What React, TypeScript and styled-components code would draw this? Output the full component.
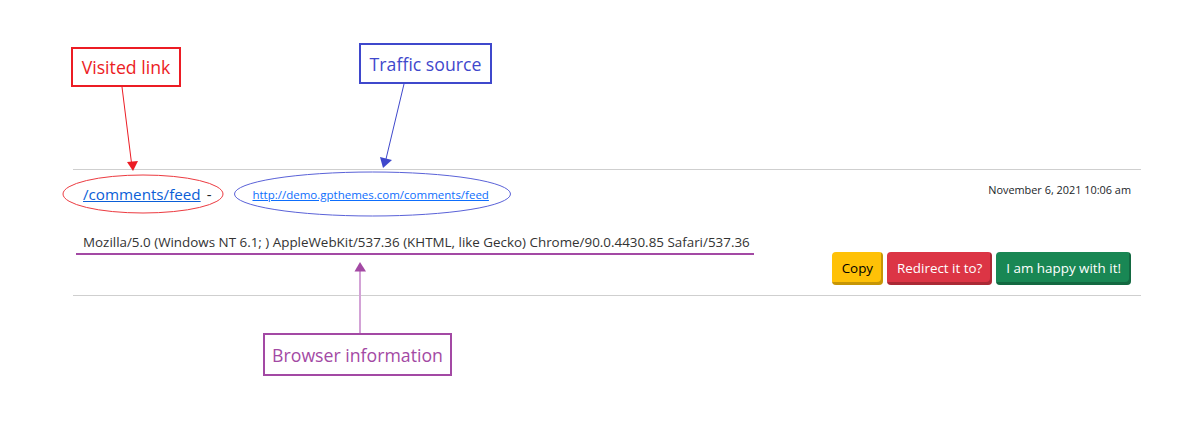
import styled, { createGlobalStyle } from 'styled-components';

const GlobalStyle = createGlobalStyle`
  body {
    margin: 0;
    background: #fff;
    font-family: 'Open Sans', 'Noto Sans', sans-serif;
    color: #212529;
  }
`;

type Tone = 'red' | 'blue' | 'purple';

const tones: Record<Tone, string> = {
  red: '#ec1c24',
  blue: '#3f48cc',
  purple: '#a349a4',
};

interface LabelProps {
  $tone: Tone;
  $left: number;
  $top: number;
  $width: number;
  $height: number;
}

function App() {
  return (
    <>
      <GlobalStyle />
      <StyledPage>
        <StyledLog>
          <StyledHeader>
            <StyledSource>
              <StyledPath href="#">/comments/feed</StyledPath>
              <StyledDash>-</StyledDash>
              <StyledReferer href="#">http://demo.gpthemes.com/comments/feed</StyledReferer>
            </StyledSource>
            <StyledDate>November 6, 2021 10:06 am</StyledDate>
          </StyledHeader>
          <StyledAgent>
            Mozilla/5.0 (Windows NT 6.1; ) AppleWebKit/537.36 (KHTML, like Gecko) Chrome/90.0.4430.85
            Safari/537.36
          </StyledAgent>
          <StyledActions>
            <StyledButton $bg="#ffc107" $fg="#000">Copy</StyledButton>
            <StyledButton $bg="#dc3545" $fg="#fff">Redirect it to?</StyledButton>
            <StyledButton $bg="#198754" $fg="#fff">I am happy with it!</StyledButton>
          </StyledActions>
        </StyledLog>

        <StyledOverlay width="1202" height="423" viewBox="0 0 1202 423">
          <line x1="122" y1="87" x2="131.5" y2="163" stroke="#ec1c24" strokeWidth="1" />
          <polygon points="127,162 138,161 133,171" fill="#ec1c24" />
          <ellipse cx="143" cy="194" rx="80" ry="19" fill="none" stroke="#ec3a40" strokeWidth="1" />

          <line x1="404" y1="84" x2="386" y2="159" stroke="#3f48cc" strokeWidth="1" />
          <polygon points="380,157 392,160 383,168" fill="#3f48cc" />
          <ellipse cx="372.5" cy="194" rx="138" ry="22" fill="none" stroke="#5a62d8" strokeWidth="1" />

          <line x1="76" y1="254" x2="754" y2="254" stroke="#a349a4" strokeWidth="2" />
          <line x1="360" y1="333" x2="360" y2="270" stroke="#d3a2d6" strokeWidth="2" />
          <polygon points="360,262 366,271.5 354.5,271.5" fill="#a349a4" />
        </StyledOverlay>

        <StyledLabel $tone="red" $left={71} $top={47} $width={110} $height={40}>
          Visited link
        </StyledLabel>
        <StyledLabel $tone="blue" $left={359} $top={43} $width={133} $height={41}>
          Traffic source
        </StyledLabel>
        <StyledLabel $tone="purple" $left={263} $top={333} $width={189} $height={43}>
          Browser information
        </StyledLabel>
      </StyledPage>
    </>
  );
}

const StyledPage = styled.div`
  position: relative;
  width: 1202px;
  height: 423px;
  padding: 169px 61px 0 73px;
  box-sizing: border-box;
  overflow: hidden;
`;

const StyledLog = styled.div`
  border-top: 1px solid #cfcfcf;
  border-bottom: 1px solid #cfcfcf;
  padding: 12px 10px 10px 10px;
`;

const StyledHeader = styled.div`
  display: flex;
  justify-content: space-between;
  align-items: flex-start;
`;

const StyledSource = styled.div`
  display: flex;
  align-items: center;
  height: 24px;
`;

const StyledPath = styled.a`
  font-size: 15.2px;
  color: #0b5ed7;
  text-decoration: underline;
`;

const StyledDash = styled.span`
  font-size: 15px;
  margin: 0 0 0 6px;
  color: #212529;
`;

const StyledReferer = styled.a`
  margin-left: 41px;
  font-size: 11.5px;
  color: #0d6efd;
  text-decoration: underline;
`;

const StyledDate = styled.span`
  font-size: 10.9px;
  line-height: 16px;
  color: #212529;
`;

const StyledAgent = styled.div`
  margin-top: 26px;
  font-size: 13.4px;
  line-height: 20px;
  color: #333;
  white-space: nowrap;
`;

const StyledActions = styled.div`
  display: flex;
  justify-content: flex-end;
  gap: 0 4px;
`;

const StyledButton = styled.button<{ $bg: string; $fg: string }>`
  height: 33px;
  padding: 0 10px 2px 10px;
  border: none;
  border-radius: 4px;
  background-color: ${(p) => p.$bg};
  color: ${(p) => p.$fg};
  font-family: 'Open Sans', 'Noto Sans', sans-serif;
  font-size: 13.4px;
  box-shadow: inset -2px -3px 0 rgba(0, 0, 0, 0.22);
  cursor: pointer;
`;

const StyledOverlay = styled.svg`
  position: absolute;
  left: 0;
  top: 0;
  pointer-events: none;
`;

const StyledLabel = styled.div<LabelProps>`
  position: absolute;
  left: ${(p) => p.$left}px;
  top: ${(p) => p.$top}px;
  width: ${(p) => p.$width}px;
  height: ${(p) => p.$height}px;
  box-sizing: border-box;
  display: flex;
  align-items: center;
  justify-content: center;
  border: 2px solid ${(p) => tones[p.$tone]};
  background: #fff;
  color: ${(p) => tones[p.$tone]};
  font-size: 17.7px;
`;

export default App;
